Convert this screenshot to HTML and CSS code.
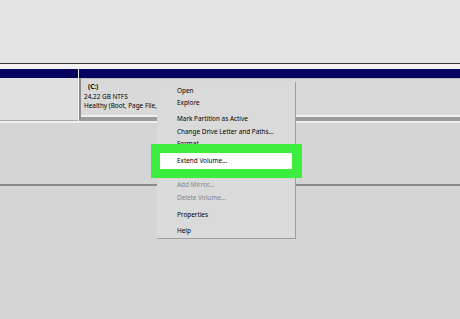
FILE: index.html
```html
<!DOCTYPE html>
<html lang="en">
<head>
  <meta charset="UTF-8">
  <title>Disk Management</title>
  <link rel="stylesheet" href="styles.css">
</head>
<body>
  <div class="window">
    <div class="top-pane"></div>
    <div class="disk">
      <div class="disk-col label-col">
        <div class="bar"></div>
        <div class="cell label-cell"></div>
      </div>
      <div class="disk-col volume-col">
        <div class="bar"></div>
        <div class="cell volume-cell">
          <div class="vol-name">(C:)</div>
          <div class="vol-line">24.22 GB NTFS</div>
          <div class="vol-line">Healthy (Boot, Page File,</div>
        </div>
      </div>
    </div>
    <div class="lower-pane"></div>
    <div class="bottom-pane"></div>

    <div class="menu">
      <div class="item">Open</div>
      <div class="item">Explore</div>
      <div class="sep"></div>
      <div class="item">Mark Partition as Active</div>
      <div class="item">Change Drive Letter and Paths...</div>
      <div class="item">Format...</div>
      <div class="sep wide"></div>
      <div class="item">Extend Volume...</div>
      <div class="item">Shrink Volume...</div>
      <div class="item disabled">Add Mirror...</div>
      <div class="item disabled">Delete Volume...</div>
      <div class="sep wide"></div>
      <div class="item">Properties</div>
      <div class="sep"></div>
      <div class="item">Help</div>

      <div class="highlight">
        <div class="highlight-inner">Extend Volume...</div>
      </div>
    </div>
  </div>
</body>
</html>
```

FILE: styles.css
```css
body {
  margin: 0;
  background-color: #d6d6d6;
  font-family: 'Noto Sans', 'Open Sans', sans-serif;
  color: #000;
}
.window {
  position: relative;
  width: 460px;
  height: 319px;
  overflow: hidden;
}
.top-pane {
  height: 63px;
  background-color: #e4e4e4;
  border-bottom: 1px solid #3a3a3a;
}
.disk {
  display: grid;
  grid-template-columns: 78px 1fr;
  column-gap: 1px;
  background-color: #f2f2f2;
  padding-top: 5px;
}
.bar {
  height: 9px;
  background-color: #05055e;
}
.cell {
  height: 43px;
  box-sizing: border-box;
}
.label-cell {
  background-color: #e0e0e0;
  border-bottom: 1px solid #a8a8a8;
}
.volume-cell {
  background-color: #d9d9d9;
  border-left: 2px solid #8c8c8c;
  border-top: 1px solid #bcbcbc;
  box-shadow: inset 0 -2px 0 #9a9a9a, inset 0 -4px 0 #f0f0f0;
  border-bottom: 2px solid #9a9a9a;
  padding: 3px 0 0 3px;
  font-size: 6.4px;
  line-height: 9.5px;
}
.vol-name {
  font-weight: bold;
  padding-left: 4px;
}
.lower-pane {
  height: 61px;
  background-color: #d5d5d5;
  border-top: 2px solid #efefef;
  border-bottom: 2px solid #8a8a8a;
}
.bottom-pane {
  height: 150px;
  background-color: #d6d6d6;
}
.menu {
  position: absolute;
  left: 157px;
  top: 82px;
  width: 139px;
  box-sizing: border-box;
  background-color: #dadada;
  border-right: 1px solid #9e9e9e;
  border-bottom: 1px solid #9e9e9e;
  padding: 3px 0 1px 20px;
  font-size: 6.4px;
}
.item {
  height: 12.2px;
  line-height: 12.2px;
  white-space: nowrap;
}
.item.disabled {
  color: #858585;
}
.sep {
  height: 4px;
}
.sep.wide {
  height: 5px;
}
.highlight {
  position: absolute;
  left: -6px;
  top: 62px;
  width: 151px;
  height: 34px;
  box-sizing: border-box;
  background-color: #3ded3d;
  padding: 9px 10px 9px 9px;
}
.highlight-inner {
  background-color: #fff;
  height: 16px;
  line-height: 16px;
  padding-left: 17px;
  white-space: nowrap;
}
```
